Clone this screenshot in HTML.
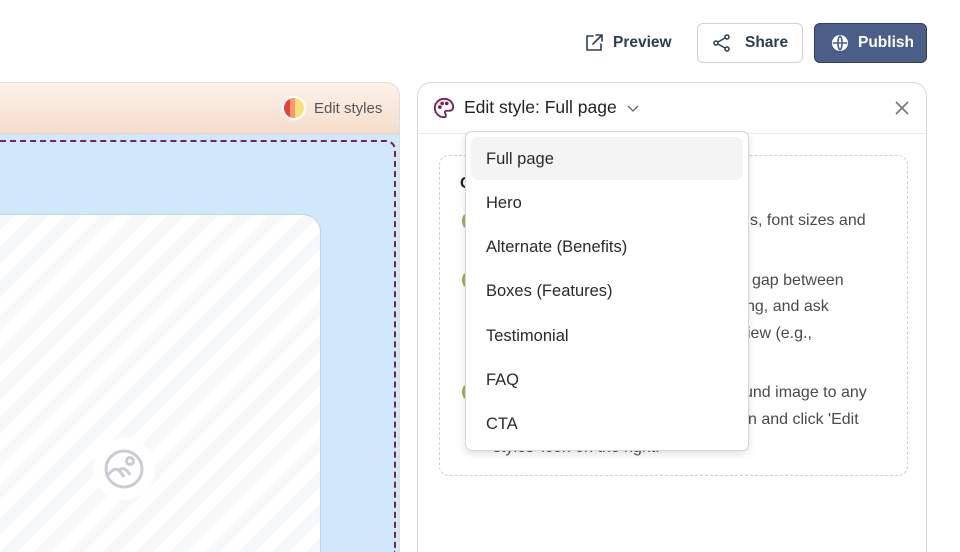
<!DOCTYPE html>
<html><head><style>
*{box-sizing:border-box;margin:0;padding:0}
html,body{width:960px;height:552px;overflow:hidden}
body{background:#fff;font-family:"Liberation Sans",sans-serif;color:#222}
#w{position:relative;width:960px;height:552px;overflow:hidden}
.abs{position:absolute}
.btn{position:absolute;top:23px;height:40px;border-radius:6px;display:flex;align-items:center;font-size:15.5px;font-weight:bold}
.t{position:absolute;font-size:16px;color:#4a4a4a;white-space:nowrap}
.item{position:absolute;left:486px;font-size:16.5px;color:#2a2a2a}
</style></head><body><div id="w">
<div class="btn" style="left:584px;color:#2c3e55">
<svg width="20" height="20" viewBox="0 0 20 20" fill="none" stroke="#2c3e55" stroke-width="1.6" stroke-linecap="round" stroke-linejoin="round"><path d="M9 3H3v14h14v-6"/><path d="M12 2h6v6M18 2l-9 9"/></svg>
<span style="margin-left:9px">Preview</span></div>
<div class="btn" style="left:697px;width:106px;border:1px solid #cfd3d8;padding-left:14px;color:#2c3e55">
<svg width="20" height="20" viewBox="0 0 20 20" fill="none" stroke="#2c3e55" stroke-width="1.5"><circle cx="15" cy="4" r="2"/><circle cx="15" cy="16" r="2"/><circle cx="4" cy="10" r="2"/><path d="M6 9l7-4M6 11l7 4"/></svg>
<span style="margin-left:13px">Share</span></div>
<div class="btn" style="left:814px;width:113px;background:#4b5e87;border:1px solid #2f3f5e;color:#fff;padding-left:16px">
<svg width="18" height="18" viewBox="0 0 20 20" fill="none" stroke="#fff" stroke-width="1.8"><circle cx="10" cy="10" r="8" fill="#fff"/><path d="M2 10h16M10 2c-3 3-3 13 0 16M10 2c3 3 3 13 0 16" stroke="#4b5e87"/></svg>
<span style="margin-left:9px">Publish</span></div>

<div class="abs" style="left:0;top:82px;width:400px;height:470px;border:1px solid #ddd;border-left:none;border-bottom:none;border-radius:0 14px 0 0;overflow:hidden;background:#cfe9fb">
<div style="height:51px;background:linear-gradient(#fdf2ea,#f5dccc);border-bottom:1px solid #e8d2c4"></div>
<div class="abs" style="left:-10px;top:57px;width:406px;height:413px;border:2px dashed #7a1f5e;border-bottom:none;border-radius:10px 10px 0 0"></div>
<div class="abs" style="left:-20px;top:131px;width:341px;height:339px;border:1px solid #bcd6e8;border-bottom:none;border-radius:18px 18px 0 0;background:repeating-linear-gradient(135deg,#fff 0 12px,#f7f8fa 12px 24px)"></div>
</div>
<div class="abs" style="left:282px;top:96px;width:24px;height:24px;border-radius:50%;border:2px solid #fff;background:linear-gradient(90deg,#e8433a 0 30%,#f59a6e 30% 55%,#f9e07a 55%);box-shadow:0 0 0 1px #eee"></div>
<div class="t" style="left:314px;top:100px;font-size:15px;color:#555">Edit styles</div>
<div class="abs" style="left:93px;top:438px;width:62px;height:62px;border-radius:50%;background:#fff"></div>
<svg class="abs" style="left:104px;top:449px" width="40" height="40" viewBox="0 0 40 40" fill="none" stroke="#c9ccd1" stroke-width="3"><circle cx="20" cy="20" r="18"/><circle cx="26" cy="12" r="3.5"/><path d="M4 26c6-8 10-8 16 2M14 22c4-4 8-3 12 4"/></svg>

<div class="abs" style="left:417px;top:82px;width:510px;height:470px;border:1px solid #d8d8d8;border-bottom:none;border-radius:14px 14px 0 0"></div>
<div class="abs" style="left:418px;top:133px;width:508px;height:1px;background:#ececec"></div>
<svg class="abs" style="left:433px;top:97px" width="22" height="22" viewBox="0 0 24 24" fill="none" stroke="#7a1f4e" stroke-width="2"><path d="M12 2a10 10 0 1 0 0 20c1.5 0 2-1 2-2 0-2-1-2-1-3.5S14 15 16 15h2a4 4 0 0 0 4-4c0-5-4.5-9-10-9z"/><circle cx="7.5" cy="11" r="1" fill="#7a1f4e"/><circle cx="10" cy="7" r="1" fill="#7a1f4e"/><circle cx="15" cy="7" r="1" fill="#7a1f4e"/></svg>
<div class="t" style="left:464px;top:97px;font-size:17.5px;color:#222">Edit style: Full page</div>
<svg class="abs" style="left:626px;top:101px" width="14" height="14" viewBox="0 0 14 14" fill="none" stroke="#666" stroke-width="1.3"><path d="M2 5l5 5 5-5"/></svg>
<svg class="abs" style="left:894px;top:100px" width="16" height="16" viewBox="0 0 16 16" stroke="#777" stroke-width="1.6"><path d="M2 2l12 12M14 2L2 14"/></svg>

<div class="abs" style="left:439px;top:155px;width:469px;height:321px;border:1px dashed #cfcfcf;border-radius:10px"></div>
<div class="t" style="left:460px;top:175px;color:#222;font-weight:bold">C</div>
<div class="abs" style="left:462px;top:214px;width:8px;height:14px;border-radius:50%;background:#9ab35a"></div>
<div class="abs" style="left:462px;top:273px;width:8px;height:14px;border-radius:50%;background:#9ab35a"></div>
<div class="abs" style="left:462px;top:385px;width:8px;height:14px;border-radius:50%;background:#9ab35a"></div>
<div class="t" style="left:750px;top:212px">s, font sizes and</div>
<div class="t" style="left:752px;top:272px">gap between</div>
<div class="t" style="left:746px;top:298px">ng, and ask</div>
<div class="t" style="left:747px;top:325px">iew (e.g.,</div>
<div class="t" style="left:744px;top:384px">und image to any</div>
<div class="t" style="left:748px;top:411px">n and click 'Edit</div>
<div class="t" style="left:493px;top:439px">styles' icon on the right.</div>

<div class="abs" style="left:465px;top:131px;width:284px;height:320px;background:#fff;border:1px solid #d6d6d6;border-radius:7px;box-shadow:0 3px 8px rgba(0,0,0,.12)"></div>
<div class="abs" style="left:471px;top:137px;width:272px;height:43px;background:#f4f4f4;border-radius:7px"></div>
<div class="item" style="top:150px">Full page</div>
<div class="item" style="top:194px">Hero</div>
<div class="item" style="top:238px">Alternate (Benefits)</div>
<div class="item" style="top:282px">Boxes (Features)</div>
<div class="item" style="top:327px">Testimonial</div>
<div class="item" style="top:371px">FAQ</div>
<div class="item" style="top:415px">CTA</div>
</div></body></html>
